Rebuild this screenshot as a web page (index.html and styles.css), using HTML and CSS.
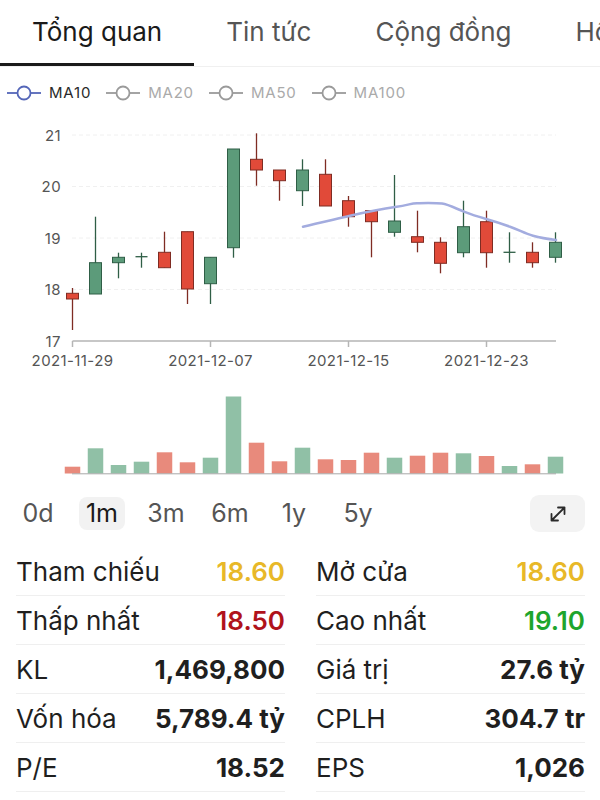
FILE: index.html
```html
<!DOCTYPE html>
<html lang="vi">
<head>
<meta charset="utf-8">
<title>Tổng quan</title>
<link rel="stylesheet" href="styles.css">
</head>
<body>
<nav class="tabs">
  <div class="tab active">Tổng quan</div>
  <div class="tab">Tin tức</div>
  <div class="tab">Cộng đồng</div>
  <div class="tab">Hồ sơ</div>
</nav>

<div class="legend">
  <div class="legend-item on">
    <svg class="legend-icon" width="34" height="16" viewBox="0 0 34 16"><line x1="0" y1="8" x2="10" y2="8"/><circle cx="17" cy="8" r="6.5"/><line x1="24" y1="8" x2="34" y2="8"/></svg>
    <span>MA10</span>
  </div>
  <div class="legend-item">
    <svg class="legend-icon" width="34" height="16" viewBox="0 0 34 16"><line x1="0" y1="8" x2="10" y2="8"/><circle cx="17" cy="8" r="6.5"/><line x1="24" y1="8" x2="34" y2="8"/></svg>
    <span>MA20</span>
  </div>
  <div class="legend-item">
    <svg class="legend-icon" width="34" height="16" viewBox="0 0 34 16"><line x1="0" y1="8" x2="10" y2="8"/><circle cx="17" cy="8" r="6.5"/><line x1="24" y1="8" x2="34" y2="8"/></svg>
    <span>MA50</span>
  </div>
  <div class="legend-item">
    <svg class="legend-icon" width="34" height="16" viewBox="0 0 34 16"><line x1="0" y1="8" x2="10" y2="8"/><circle cx="17" cy="8" r="6.5"/><line x1="24" y1="8" x2="34" y2="8"/></svg>
    <span>MA100</span>
  </div>
</div>

<svg class="chart" width="600" height="372" viewBox="0 118 600 372">
  <g class="grid">
    <line x1="72" y1="135" x2="556" y2="135"/>
    <line x1="72" y1="186.5" x2="556" y2="186.5"/>
    <line x1="72" y1="238" x2="556" y2="238"/>
    <line x1="72" y1="289.5" x2="556" y2="289.5"/>
  </g>
  <g class="ylabels">
    <text x="61" y="135">21</text>
    <text x="61" y="186.5">20</text>
    <text x="61" y="238">19</text>
    <text x="61" y="289.5">18</text>
    <text x="61" y="341">17</text>
  </g>
  <g class="axis">
    <line x1="72.5" y1="341" x2="556" y2="341"/>
    <line x1="72.5" y1="341" x2="72.5" y2="347"/>
    <line x1="210.5" y1="341" x2="210.5" y2="347"/>
    <line x1="348.5" y1="341" x2="348.5" y2="347"/>
    <line x1="486.5" y1="341" x2="486.5" y2="347"/>
  </g>
  <g class="xlabels">
    <text x="72.5" y="360">2021-11-29</text>
    <text x="210.5" y="360">2021-12-07</text>
    <text x="348.5" y="360">2021-12-15</text>
    <text x="486.5" y="360">2021-12-23</text>
  </g>

  <g class="candles">
    <g class="dn"><line x1="72.5" y1="288" x2="72.5" y2="330"/><rect x="66.5" y="293.3" width="12" height="5.7"/></g>
    <g class="up"><line x1="95.5" y1="216.7" x2="95.5" y2="294"/><rect x="89.5" y="262.7" width="12" height="31.3"/></g>
    <g class="up"><line x1="118.5" y1="252.7" x2="118.5" y2="278.3"/><rect x="112.5" y="257.3" width="12" height="5.4"/></g>
    <g class="up"><line x1="141.5" y1="252.7" x2="141.5" y2="267.7"/><line x1="135.5" y1="256.7" x2="147.5" y2="256.7"/></g>
    <g class="dn"><line x1="164.5" y1="231.7" x2="164.5" y2="267.7"/><rect x="158.5" y="252.3" width="12" height="15.4"/></g>
    <g class="dn"><line x1="187.5" y1="231.7" x2="187.5" y2="304"/><rect x="181.5" y="231.7" width="12" height="57.3"/></g>
    <g class="up"><line x1="210.5" y1="257.3" x2="210.5" y2="304"/><rect x="204.5" y="257.3" width="12" height="26.4"/></g>
    <g class="up"><line x1="233.5" y1="149" x2="233.5" y2="257.7"/><rect x="227.5" y="149" width="12" height="98.7"/></g>
    <g class="dn"><line x1="256.5" y1="133.3" x2="256.5" y2="185.7"/><rect x="250.5" y="159.3" width="12" height="10.7"/></g>
    <g class="dn"><line x1="279.5" y1="170" x2="279.5" y2="200.7"/><rect x="273.5" y="170" width="12" height="10.7"/></g>
    <g class="up"><line x1="302.5" y1="159.3" x2="302.5" y2="206"/><rect x="296.5" y="170" width="12" height="20.7"/></g>
    <g class="dn"><line x1="325.5" y1="159.3" x2="325.5" y2="206"/><rect x="319.5" y="174.3" width="12" height="31.7"/></g>
    <g class="dn"><line x1="348.5" y1="196" x2="348.5" y2="226.7"/><rect x="342.5" y="200.7" width="12" height="16"/></g>
    <g class="dn"><line x1="371.5" y1="210.7" x2="371.5" y2="257.3"/><rect x="365.5" y="210.7" width="12" height="11"/></g>
    <g class="up"><line x1="394.5" y1="175" x2="394.5" y2="236.7"/><rect x="388.5" y="221" width="12" height="11.3"/></g>
    <g class="dn"><line x1="417.5" y1="210.7" x2="417.5" y2="252.3"/><rect x="411.5" y="236.7" width="12" height="5.6"/></g>
    <g class="dn"><line x1="440.5" y1="237.3" x2="440.5" y2="273.3"/><rect x="434.5" y="242.3" width="12" height="21"/></g>
    <g class="up"><line x1="463.5" y1="200.7" x2="463.5" y2="257.3"/><rect x="457.5" y="226.7" width="12" height="26"/></g>
    <g class="dn"><line x1="486.5" y1="210.7" x2="486.5" y2="267.7"/><rect x="480.5" y="221.7" width="12" height="31"/></g>
    <g class="up"><line x1="509.5" y1="232.3" x2="509.5" y2="262.7"/><line x1="503.5" y1="252.3" x2="515.5" y2="252.3"/></g>
    <g class="dn"><line x1="532.5" y1="242.3" x2="532.5" y2="267.7"/><rect x="526.5" y="252.3" width="12" height="10.4"/></g>
    <g class="up"><line x1="555.5" y1="232.3" x2="555.5" y2="262.7"/><rect x="549.5" y="242.3" width="12" height="15"/></g>
  </g>

  <path class="ma" d="M303 226.7 C318 223, 334 219.5, 349 216 S380 209, 395 207 S410 203.3, 417 203.2 S436 202.8, 442 203.6 S456 208.5, 464 211.7 S479 217, 487 219.3 S501 223.5, 510 226.7 S525 233.5, 533 235.7 S548 239, 556 240"/>

  <g class="vol">
    <rect class="vdn" x="64.75" y="466.7" width="15.5" height="6.8"/>
    <rect class="vup" x="87.75" y="448.3" width="15.5" height="25.2"/>
    <rect class="vup" x="110.75" y="465" width="15.5" height="8.5"/>
    <rect class="vup" x="133.75" y="461.7" width="15.5" height="11.8"/>
    <rect class="vdn" x="156.75" y="452.3" width="15.5" height="21.2"/>
    <rect class="vdn" x="179.75" y="462.3" width="15.5" height="11.2"/>
    <rect class="vup" x="202.75" y="457.7" width="15.5" height="15.8"/>
    <rect class="vup" x="225.75" y="396.5" width="15.5" height="77"/>
    <rect class="vdn" x="248.75" y="442.7" width="15.5" height="30.8"/>
    <rect class="vdn" x="271.75" y="461.3" width="15.5" height="12.2"/>
    <rect class="vup" x="294.75" y="447.7" width="15.5" height="25.8"/>
    <rect class="vdn" x="317.75" y="459.3" width="15.5" height="14.2"/>
    <rect class="vdn" x="340.75" y="460" width="15.5" height="13.5"/>
    <rect class="vdn" x="363.75" y="452.7" width="15.5" height="20.8"/>
    <rect class="vup" x="386.75" y="457.7" width="15.5" height="15.8"/>
    <rect class="vdn" x="409.75" y="455.7" width="15.5" height="17.8"/>
    <rect class="vdn" x="432.75" y="452.7" width="15.5" height="20.8"/>
    <rect class="vup" x="455.75" y="453.3" width="15.5" height="20.2"/>
    <rect class="vdn" x="478.75" y="456" width="15.5" height="17.5"/>
    <rect class="vup" x="501.75" y="466" width="15.5" height="7.5"/>
    <rect class="vdn" x="524.75" y="464.3" width="15.5" height="9.2"/>
    <rect class="vup" x="547.75" y="456.7" width="15.5" height="16.8"/>
  </g>
  <line class="vbase" x1="72" y1="473.8" x2="556" y2="473.8"/>
</svg>

<div class="periods">
  <div class="period"><span>0d</span></div>
  <div class="period active"><span>1m</span></div>
  <div class="period"><span>3m</span></div>
  <div class="period"><span>6m</span></div>
  <div class="period"><span>1y</span></div>
  <div class="period"><span>5y</span></div>
  <button class="expand" type="button" aria-label="Phóng to">
    <svg width="22" height="22" viewBox="0 0 22 22"><path d="M4.5 17.5 L17.5 4.5 M11 4.5 H17.5 V11 M4.5 11 V17.5 H11"/></svg>
  </button>
</div>

<div class="stats">
  <div class="cell"><span class="label">Tham chiếu</span><span class="val ref">18.60</span></div>
  <div class="cell"><span class="label">Mở cửa</span><span class="val ref">18.60</span></div>
  <div class="cell"><span class="label">Thấp nhất</span><span class="val low">18.50</span></div>
  <div class="cell"><span class="label">Cao nhất</span><span class="val high">19.10</span></div>
  <div class="cell"><span class="label">KL</span><span class="val strong">1,469,800</span></div>
  <div class="cell"><span class="label">Giá trị</span><span class="val strong">27.6 tỷ</span></div>
  <div class="cell"><span class="label">Vốn hóa</span><span class="val strong">5,789.4 tỷ</span></div>
  <div class="cell"><span class="label">CPLH</span><span class="val strong">304.7 tr</span></div>
  <div class="cell"><span class="label">P/E</span><span class="val strong">18.52</span></div>
  <div class="cell"><span class="label">EPS</span><span class="val strong">1,026</span></div>
</div>
</body>
</html>
```

FILE: styles.css
```css
* { box-sizing: border-box; }
html, body {
  margin: 0;
  padding: 0;
  background: #ffffff;
  width: 600px;
  overflow: hidden;
  font-family: "Inter", "Noto Sans", sans-serif;
  color: #1c1c1c;
}

.tabs {
  display: flex;
  height: 67px;
  border-bottom: 1px solid #f0f0f0;
  overflow: hidden;
  white-space: nowrap;
}
.tab {
  flex: none;
  padding: 0 32px;
  height: 66px;
  line-height: 64px;
  font-size: 26px;
  color: #555555;
}
.tab.active {
  color: #1a1a1a;
  border-bottom: 3px solid #1a1a1a;
}

.legend {
  display: flex;
  align-items: center;
  height: 51px;
  padding-left: 7px;
}
.legend-item {
  display: flex;
  align-items: center;
  gap: 8px;
  margin-right: 15px;
  font-size: 15px;
  letter-spacing: 0.8px;
  color: #aaaaaa;
}
.legend-icon line, .legend-icon circle {
  stroke: #9a9a9a;
  stroke-width: 1.8;
  fill: #ffffff;
}
.legend-item.on { color: #2a2a2a; }
.legend-item.on .legend-icon line,
.legend-item.on .legend-icon circle { stroke: #5466b8; }

.chart { display: block; }
.chart text {
  font-family: "Inter", "Noto Sans", sans-serif;
  font-size: 15px;
  fill: #555555;
  dominant-baseline: central;
  letter-spacing: 0.4px;
}
.ylabels text { text-anchor: end; }
.xlabels text { text-anchor: middle; }
.grid line { stroke: #f0f0f0; stroke-width: 1; stroke-dasharray: 4 3; }
.axis line { stroke: #b5b5b5; stroke-width: 1.5; }

.candles line { stroke-width: 1.3; }
.candles rect { stroke-width: 1; }
.up line { stroke: #2f5e46; }
.up rect { fill: #5c9b7a; stroke: #2f5e46; }
.dn line { stroke: #7f2c23; }
.dn rect { fill: #e14a39; stroke: #7f2c23; }

.ma { fill: none; stroke: #a3acdf; stroke-width: 2.5; stroke-linecap: round; }

.vup { fill: #90c0a6; }
.vdn { fill: #e88a7c; }
.vbase { stroke: #a8a8a8; stroke-width: 1; }

.periods {
  display: flex;
  align-items: center;
  height: 37px;
  margin-top: 5px;
  padding-left: 6px;
  padding-right: 15px;
}
.period {
  width: 64px;
  display: flex;
  justify-content: center;
}
.period span {
  display: block;
  height: 33px;
  line-height: 33px;
  padding: 0 7px;
  border-radius: 8px;
  font-size: 25px;
  color: #555555;
}
.period.active span {
  background: #f2f2f2;
  color: #1a1a1a;
}
.expand {
  margin-left: auto;
  width: 55px;
  height: 37px;
  border: none;
  border-radius: 9px;
  background: #f3f3f3;
  padding: 0;
  display: flex;
  align-items: center;
  justify-content: center;
}
.expand path {
  fill: none;
  stroke: #2a2a2a;
  stroke-width: 1.8;
  stroke-linecap: round;
  stroke-linejoin: round;
}

.stats {
  display: grid;
  grid-template-columns: 269px 269px;
  column-gap: 31px;
  margin-top: 15px;
  padding-left: 16px;
}
.cell {
  display: flex;
  align-items: center;
  justify-content: space-between;
  height: 49px;
  border-bottom: 1px solid #efefef;
  font-size: 26px;
  white-space: nowrap;
}
.label { color: #1f1f1f; }
.val { font-weight: 600; }
.val.ref { color: #e8b828; }
.val.low { color: #b0121b; }
.val.high { color: #1ea52d; }
.val.strong { color: #1f1f1f; font-weight: 700; }
```
